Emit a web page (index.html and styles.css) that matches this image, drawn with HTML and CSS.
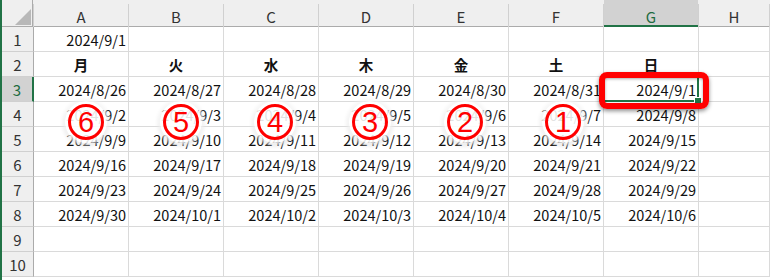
FILE: index.html
```html
<!DOCTYPE html>
<html lang="ja">
<head>
<meta charset="utf-8">
<link rel="stylesheet" href="styles.css">
</head>
<body>
<div class="wrap">
  <div class="sheet">
    <div class="ch corner"><span class="tri"></span></div>
    <div class="ch">A</div><div class="ch">B</div><div class="ch">C</div><div class="ch">D</div><div class="ch">E</div><div class="ch">F</div><div class="ch sel">G</div><div class="ch">H</div>

    <div class="rh">1</div><div class="c">2024/9/1</div><div class="c"></div><div class="c"></div><div class="c"></div><div class="c"></div><div class="c"></div><div class="c"></div><div class="c"></div>

    <div class="rh">2</div><div class="c w">月</div><div class="c w">火</div><div class="c w">水</div><div class="c w">木</div><div class="c w">金</div><div class="c w">土</div><div class="c w">日</div><div class="c"></div>

    <div class="rh sel">3</div><div class="c">2024/8/26</div><div class="c">2024/8/27</div><div class="c">2024/8/28</div><div class="c">2024/8/29</div><div class="c">2024/8/30</div><div class="c">2024/8/31</div><div class="c">2024/9/1</div><div class="c"></div>

    <div class="rh">4</div><div class="c">2024/9/2</div><div class="c">2024/9/3</div><div class="c">2024/9/4</div><div class="c">2024/9/5</div><div class="c">2024/9/6</div><div class="c">2024/9/7</div><div class="c">2024/9/8</div><div class="c"></div>

    <div class="rh">5</div><div class="c">2024/9/9</div><div class="c">2024/9/10</div><div class="c">2024/9/11</div><div class="c">2024/9/12</div><div class="c">2024/9/13</div><div class="c">2024/9/14</div><div class="c">2024/9/15</div><div class="c"></div>

    <div class="rh">6</div><div class="c">2024/9/16</div><div class="c">2024/9/17</div><div class="c">2024/9/18</div><div class="c">2024/9/19</div><div class="c">2024/9/20</div><div class="c">2024/9/21</div><div class="c">2024/9/22</div><div class="c"></div>

    <div class="rh">7</div><div class="c">2024/9/23</div><div class="c">2024/9/24</div><div class="c">2024/9/25</div><div class="c">2024/9/26</div><div class="c">2024/9/27</div><div class="c">2024/9/28</div><div class="c">2024/9/29</div><div class="c"></div>

    <div class="rh">8</div><div class="c">2024/9/30</div><div class="c">2024/10/1</div><div class="c">2024/10/2</div><div class="c">2024/10/3</div><div class="c">2024/10/4</div><div class="c">2024/10/5</div><div class="c">2024/10/6</div><div class="c"></div>

    <div class="rh">9</div><div class="c"></div><div class="c"></div><div class="c"></div><div class="c"></div><div class="c"></div><div class="c"></div><div class="c"></div><div class="c"></div>

    <div class="rh">10</div><div class="c"></div><div class="c"></div><div class="c"></div><div class="c"></div><div class="c"></div><div class="c"></div><div class="c"></div><div class="c"></div>
  </div>

  <div class="active"><span class="handle"></span></div>
  <div class="redbox"></div>

  <div class="badge b6"><span class="ring">6</span></div>
  <div class="badge b5"><span class="ring">5</span></div>
  <div class="badge b4"><span class="ring">4</span></div>
  <div class="badge b3"><span class="ring">3</span></div>
  <div class="badge b2"><span class="ring">2</span></div>
  <div class="badge b1"><span class="ring">1</span></div>
</div>
</body>
</html>
```

FILE: styles.css
```css
html, body {
  margin: 0;
  padding: 0;
  background: #ffffff;
}

.wrap {
  position: relative;
  width: 770px;
  height: 280px;
  overflow: hidden;
  border-left: 2px solid #217346;
  box-sizing: border-box;
  background: #ffffff;
  font-family: "Noto Sans CJK JP", "Noto Sans", sans-serif;
}

.sheet {
  display: grid;
  grid-template-columns: 32px repeat(7, 95px) 1fr;
  grid-template-rows: 27px repeat(10, 25px);
}

.ch {
  background: #efefef;
  box-sizing: border-box;
  color: #333;
  font-size: 15px;
  display: flex;
  align-items: center;
  justify-content: center;
  padding-top: 5px;
  border-right: 1px solid #d0d0d0;
  border-image: linear-gradient(to bottom, #efefef 0, #efefef 5px, #d0d0d0 5px) 1;
  border-image-width: 0 1px 0 0;
  box-shadow: inset 0 -1px 0 #ababab;
}

.ch.corner {
  position: relative;
  box-shadow: inset 0 -1px 0 #ababab, inset -1px 0 0 #ababab;
}

.tri {
  position: absolute;
  left: 13px;
  top: 9px;
  width: 0;
  height: 0;
  border-style: solid;
  border-width: 0 0 16px 16px;
  border-color: transparent transparent #b8b8b8 transparent;
}

.ch.sel {
  background: #d2d2d2;
  color: #1d6b40;
  box-shadow: inset 0 -2px 0 #217346;
}

.rh {
  background: #efefef;
  border-right: 1px solid #ababab;
  border-bottom: 1px solid #d0d0d0;
  box-sizing: border-box;
  color: #333;
  font-size: 15px;
  display: flex;
  align-items: center;
  justify-content: center;
}

.rh.sel {
  background: #d2d2d2;
  color: #1d6b40;
  border-right: 2px solid #217346;
}

.c {
  border-right: 1px solid #dadada;
  border-bottom: 1px solid #dadada;
  box-sizing: border-box;
  font-size: 14.5px;
  color: #111;
  display: flex;
  align-items: center;
  justify-content: flex-end;
  padding-right: 2px;
  white-space: nowrap;
}

.c.w {
  justify-content: center;
  font-weight: 700;
  padding-right: 0;
}

.active {
  position: absolute;
  left: 600px;
  top: 75px;
  width: 97px;
  height: 27px;
  border: 2px solid #217346;
  box-sizing: border-box;
}

.handle {
  position: absolute;
  right: -5px;
  bottom: -5px;
  width: 6px;
  height: 6px;
  background: #217346;
  border: 1px solid #fff;
}

.redbox {
  position: absolute;
  left: 597px;
  top: 72px;
  width: 110px;
  height: 37px;
  border: 6px solid #ff0000;
  border-radius: 8px;
  box-sizing: border-box;
  box-shadow: 0 2px 4px rgba(0,0,0,0.45), inset 0 1px 3px rgba(0,0,0,0.35);
}

.badge {
  position: absolute;
  top: 101px;
  width: 42px;
  height: 42px;
  border-radius: 50%;
  background: rgba(255,255,255,0.88);
  box-shadow: 0 0 4px 2px rgba(255,255,255,0.9), 0 1px 5px rgba(0,0,0,0.3);
  display: flex;
  align-items: center;
  justify-content: center;
}

.ring {
  width: 36px;
  height: 36px;
  border: 3px solid #ff0000;
  border-radius: 50%;
  box-sizing: border-box;
  color: #ff0000;
  font-family: "Liberation Sans", sans-serif;
  font-size: 29px;
  line-height: 31px;
  text-align: center;
}

.b6 { left: 63px; }
.b5 { left: 158px; }
.b4 { left: 252px; }
.b3 { left: 347px; }
.b2 { left: 442px; }
.b1 { left: 540px; }
```
